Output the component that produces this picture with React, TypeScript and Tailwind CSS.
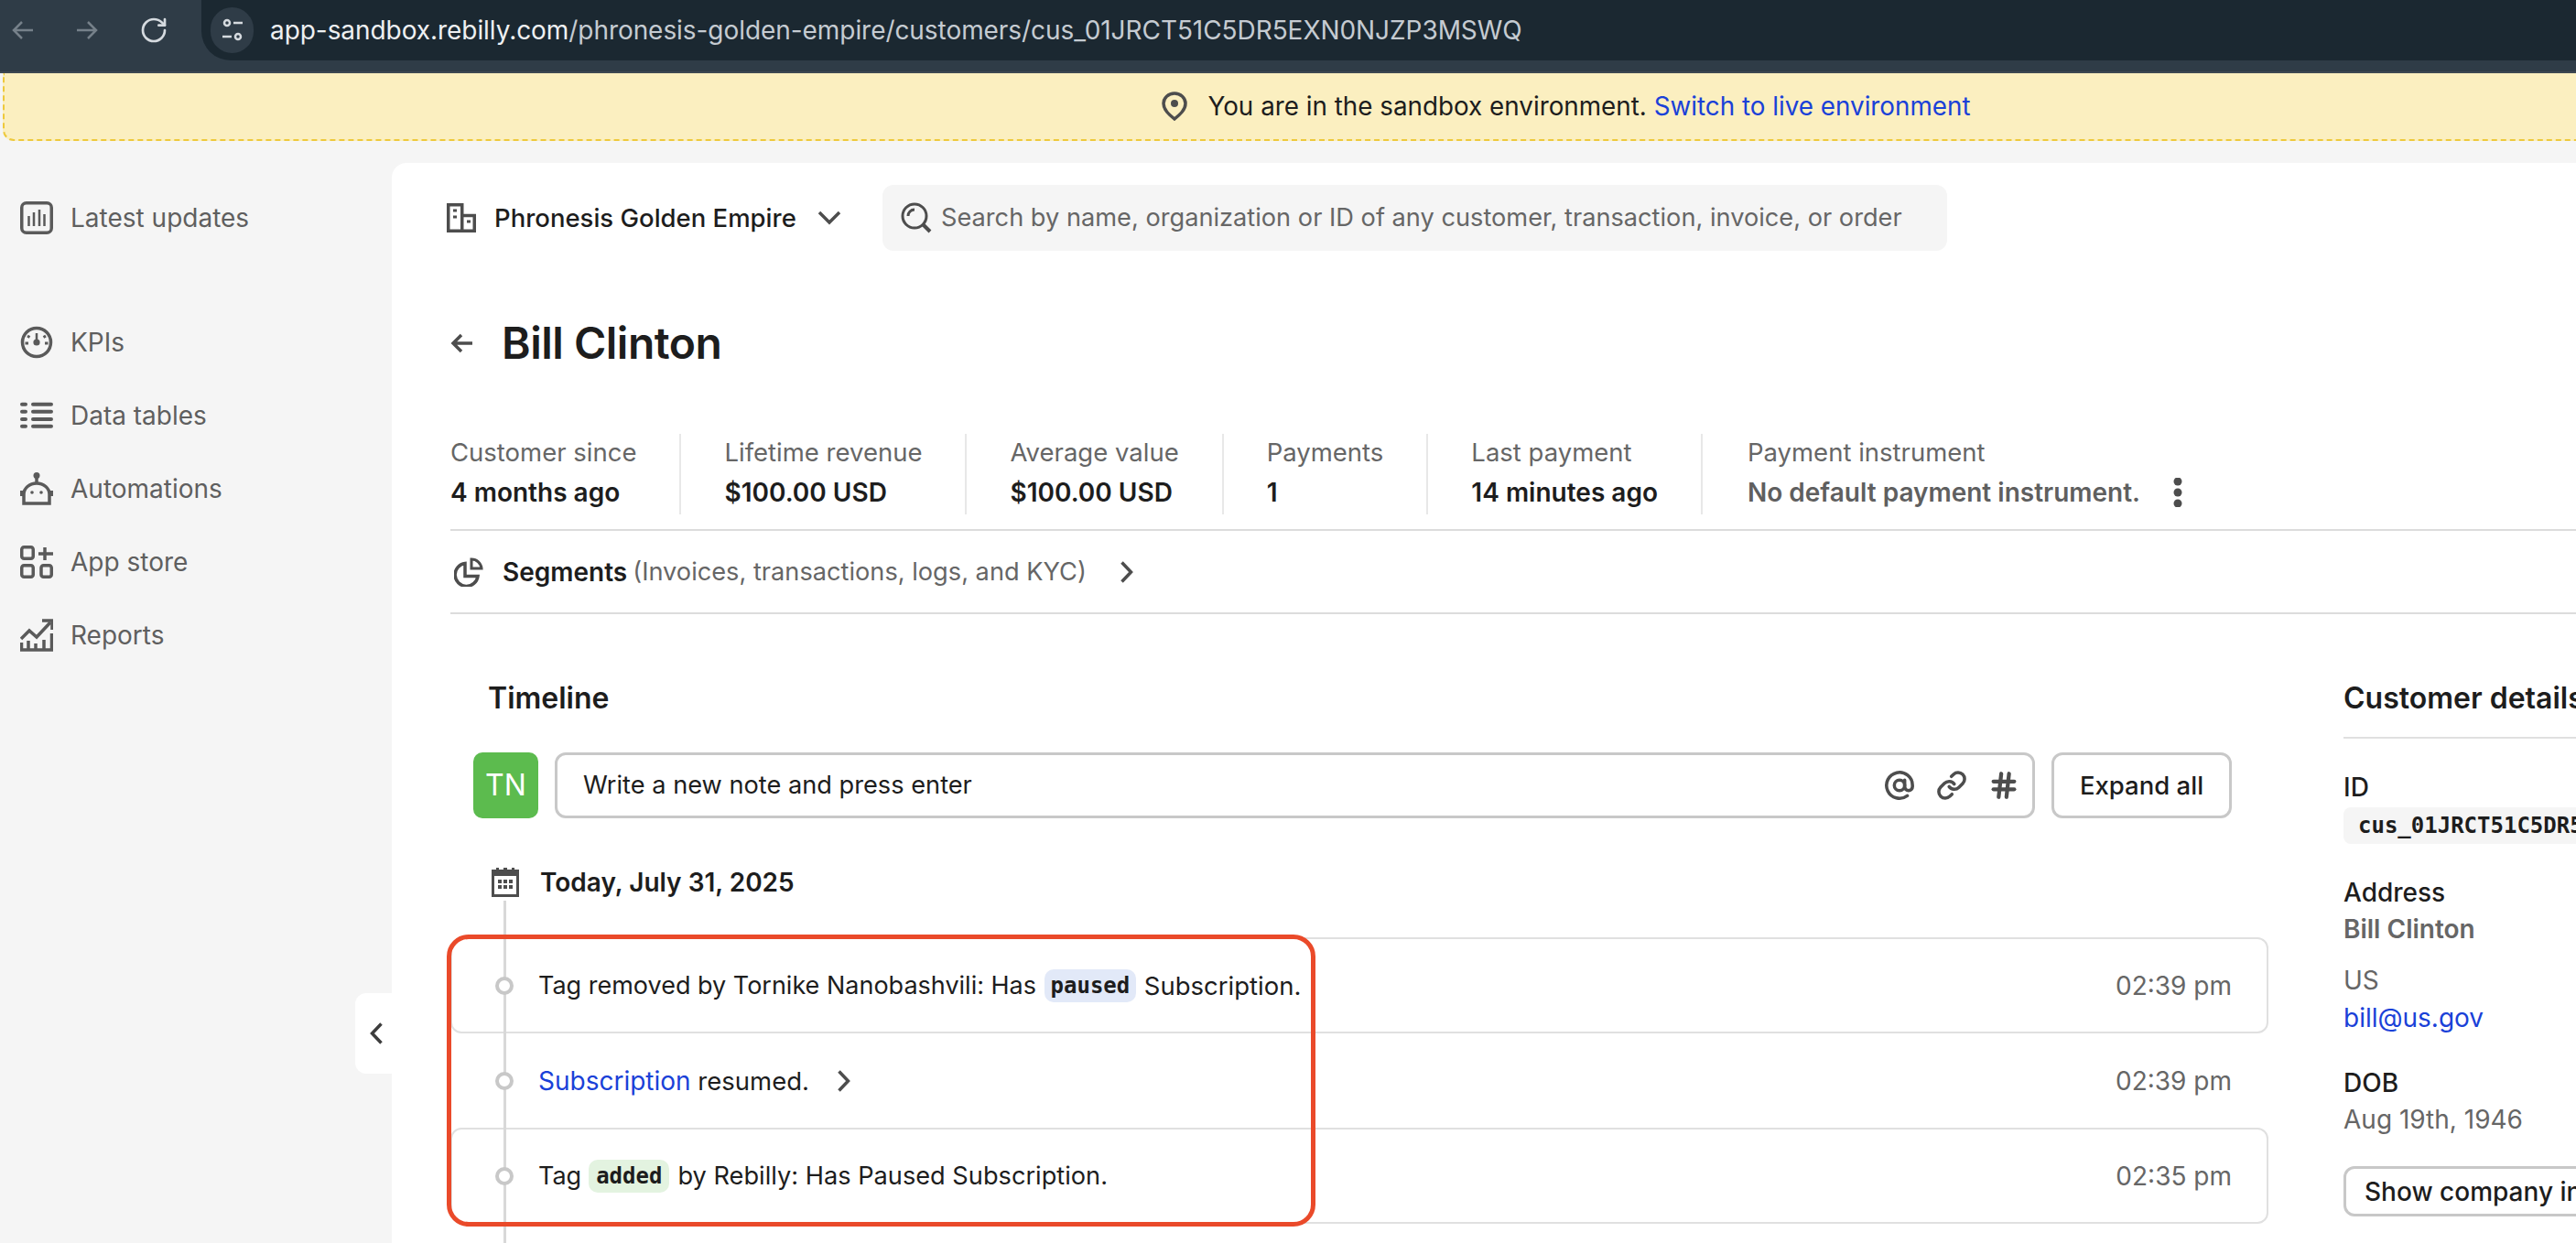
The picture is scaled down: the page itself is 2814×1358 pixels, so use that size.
import React from 'react';
import { RotateCw, Hash, Link, AtSign } from 'lucide-react';

const Svg: React.FC<{ className?: string; children: React.ReactNode }> = ({ className, children }) => (
  <svg viewBox="0 0 36 36" fill="none" stroke="currentColor" strokeWidth={3.5} className={className}>
    {children}
  </svg>
);

const navIcon = 'w-[36px] h-[36px] shrink-0 text-[#5a5a5a]';

const UpdatesIcon = () => (
  <Svg className={navIcon}>
    <rect x="1.75" y="1.75" width="32.5" height="32.5" rx="5" />
    <path d="M9.5 16v11M15 12v15M21 9v18M26.500 14v13" strokeWidth={2.5} />
  </Svg>
);
const GaugeIcon = () => (
  <Svg className={navIcon}>
    <circle cx="18" cy="18" r="15.5" />
    <path d="M18 8v10" strokeWidth={2.5} />
    <circle cx="18" cy="18" r="3.6" fill="currentColor" stroke="none" />
    <path d="M8 11l2.500 1.500M28 11l-2.500 1.500M5.500 19h3.500M27 19h3.500" strokeWidth={3} />
  </Svg>
);
const TablesIcon = () => (
  <Svg className={navIcon}>
    <path d="M2 5.700h4M2 13.700h4M2 22h4M2 29.700h4M14 5.700h20M14 13.700h20M14 22h20M14 29.700h20" strokeLinecap="round" strokeWidth={4} />
  </Svg>
);
const RobotIcon = () => (
  <Svg className={navIcon}>
    <circle cx="18" cy="3.5" r="3.5" fill="currentColor" stroke="none" />
    <path d="M18 6v6" />
    <path d="M4 34V24a14 12 0 0 1 28 0v10z" />
    <path d="M2 20v6M34 20v6" strokeWidth={4} />
    <circle cx="13" cy="22" r="1.8" fill="currentColor" stroke="none" />
    <circle cx="23" cy="22" r="1.8" fill="currentColor" stroke="none" />
  </Svg>
);
const AppsIcon = () => (
  <Svg className={navIcon}>
    <rect x="1.75" y="1.75" width="12.5" height="12.5" rx="2.5" />
    <rect x="1.75" y="21.75" width="12.5" height="12.5" rx="2.5" />
    <rect x="23" y="21.75" width="11.25" height="12.5" rx="2.5" />
    <path d="M27 2v14M20 9h16" />
  </Svg>
);
const ReportsIcon = () => (
  <Svg className={navIcon}>
    <path d="M1 22l9-9 8 7L33 4" />
    <path d="M24 2h11v10" />
    <path d="M1.500 26v8h33V16M9 24v9M17 27v6M26 23v10" />
  </Svg>
);
const BuildingIcon = () => (
  <svg viewBox="0 0 32 32" fill="none" stroke="#4d4d4d" strokeWidth={3.5} className="w-[32px] h-[32px] shrink-0">
    <path d="M1.750 30.250V1.750h15v28.500zM16.750 13.500h13.500v16.750h-13.500z" />
    <path d="M7 8h4M7 15h4M22 20h4" strokeWidth={3} />
  </svg>
);
const SearchIcon = () => (
  <svg viewBox="0 0 34 34" fill="none" stroke="#4d4d4d" strokeWidth={3} className="w-[34px] h-[34px] shrink-0">
    <circle cx="15" cy="15" r="13" />
    <path d="M8 15a7 7 0 0 1 7-7" />
    <path d="M24 24l8 8" strokeWidth={4} />
  </svg>
);
const PinIcon = () => (
  <svg viewBox="0 0 28 32" fill="none" stroke="#4d4d4d" strokeWidth={3.5} className="w-[28px] h-[32px] shrink-0">
    <path d="M14 30C8 25 2 20 2 13a12 11 0 0 1 24 0c0 7-6 12-12 17z" />
    <circle cx="14" cy="13" r="4" fill="#4d4d4d" stroke="none" />
  </svg>
);
const PieIcon = () => (
  <svg viewBox="0 0 32 32" fill="none" stroke="#4d4d4d" strokeWidth={3.5} className="w-[32px] h-[32px] shrink-0">
    <path d="M12 6.500a12.500 12.500 0 1 0 14 14H12z" />
    <path d="M19 2v10h11A11 11 0 0 0 19 2z" strokeWidth={3} />
  </svg>
);
const CalendarIcon = () => (
  <svg viewBox="0 0 32 32" className="w-[32px] h-[32px] shrink-0">
    <path d="M1 2h5V0h3v2h5V0h4v2h5V0h3v2h5v30H1z" fill="#4d4d4d" />
    <rect x="4" y="9" width="24" height="20" fill="#fff" />
    <path d="M8 13h4v4H8zM14 13h4v4h-4zM20 13h4v4h-4zM8 19h4v4H8zM14 19h4v4h-4zM20 19h4v4h-4z" fill="#4d4d4d" />
  </svg>
);
const SiteIcon = () => (
  <svg viewBox="0 0 24 26" fill="none" stroke="#d5dadf" strokeWidth={2.5} className="w-[24px] h-[26px]">
    <circle cx="6" cy="5" r="3" />
    <path d="M13 5h10M1 20h10" />
    <circle cx="18" cy="20" r="3" />
  </svg>
);
const Arrow: React.FC<{ className?: string; strokeWidth?: number }> = ({ className, strokeWidth = 3.5 }) => (
  <svg viewBox="0 0 24 22" fill="none" stroke="currentColor" strokeWidth={strokeWidth} className={className}>
    <path d="M24 11H3M12 2l-9 9 9 9" />
  </svg>
);
const Chevron: React.FC<{ className?: string }> = ({ className }) => (
  <svg viewBox="0 0 15 24" fill="none" stroke="currentColor" strokeWidth={3.5} className={className}>
    <path d="M2.500 1.500L12.500 12L2.500 22.500" />
  </svg>
);

const stats = [
  { label: 'Customer since', value: '4 months ago' },
  { label: 'Lifetime revenue', value: '$100.00 USD' },
  { label: 'Average value', value: '$100.00 USD' },
  { label: 'Payments', value: '1' },
  { label: 'Last payment', value: '14 minutes ago' },
];

const nav = [
  { icon: <GaugeIcon />, label: 'KPIs' },
  { icon: <TablesIcon />, label: 'Data tables' },
  { icon: <RobotIcon />, label: 'Automations' },
  { icon: <AppsIcon />, label: 'App store' },
  { icon: <ReportsIcon />, label: 'Reports' },
];

const dot = <span className="relative z-10 w-[20px] h-[20px] rounded-full border-[4px] border-[#c8c8c8] bg-white shrink-0" />;
const mono = "font-['DejaVu_Sans_Mono',monospace] text-[24px] leading-[36px] font-semibold text-[#1d1d1d]";

const App: React.FC = () => (
  <div className="relative flex flex-col w-[2814px] h-[1358px] overflow-hidden bg-[#f5f5f5] font-['Inter',sans-serif] text-[28px] leading-[40px] text-[#1d1d1d]">
    {/* Browser bar */}
    <div className="h-[80px] shrink-0 bg-[#2f3c47] border-b-2 border-[#3d4852] flex items-start">
      <div className="w-[115px] h-[66px] flex items-center shrink-0 pl-[12px] gap-[48px] text-[#76818a]">
        <Arrow strokeWidth={2.5} className="w-[24px] h-[22px] shrink-0" />
        <Arrow strokeWidth={2.5} className="w-[24px] h-[22px] shrink-0 rotate-180" />
        <RotateCw size={32} strokeWidth={2} className="shrink-0 text-[#d5dadf] -ml-[4px]" />
      </div>
      <div className="ml-[105px] flex-1 h-[66px] bg-[#1b2831] rounded-bl-[32px] flex items-center pl-[10px]">
        <div className="w-[47px] h-[50px] rounded-full bg-[#2f3c47] flex items-center justify-center shrink-0">
          <SiteIcon />
        </div>
        <span className="ml-[18px] text-[#c5cbd1] tracking-[-0.06px]">
          <span className="text-[#eef0f2]">app-sandbox.rebilly.com</span>/phronesis-golden-empire/customers/cus_01JRCT51C5DR5EXN0NJZP3MSWQ
        </span>
      </div>
    </div>

    {/* Sandbox banner */}
    <div className="h-[74px] w-[3416px] ml-[3px] shrink-0 bg-[#fbefc0] border-2 border-t-0 border-dashed border-[#eec93c] rounded-b-xl flex items-center justify-center gap-[22px]">
      <PinIcon />
      <span className="text-[27.8px]">
        You are in the sandbox environment. <span className="text-[#1a41d8]">Switch to live environment</span>
      </span>
    </div>

    <div className="flex flex-1 min-h-0 pt-[24px]">
      {/* Sidebar */}
      <aside className="w-[428px] shrink-0 pt-[20px] pl-[22px] text-[#5f5f5f]">
        <div className="h-[80px] flex items-center gap-[19px] mb-[56px]">
          <UpdatesIcon />
          Latest updates
        </div>
        {nav.map((item) => (
          <div key={item.label} className="h-[80px] flex items-center gap-[19px]">
            {item.icon}
            {item.label}
          </div>
        ))}
      </aside>

      {/* Main panel */}
      <main className="relative flex-1 min-w-0 bg-white rounded-tl-2xl pl-[64px] pt-[24px] overflow-hidden">
        <div className="flex items-center h-[72px]">
          <div className="w-[476px] flex items-center shrink-0 -ml-[4px]">
            <BuildingIcon />
            <span className="ml-[20px] text-[27.5px] font-medium">Phronesis Golden Empire</span>
            <svg viewBox="0 0 26 16" fill="none" stroke="#4d4d4d" strokeWidth={3.5} className="w-[26px] h-[16px] ml-[23px]">
              <path d="M2 2l11 11L24 2" />
            </svg>
          </div>
          <div className="w-[1163px] h-[72px] rounded-xl bg-[#f5f5f5] flex items-center pl-[20px] gap-[10px] text-[27.2px] text-[#666]">
            <SearchIcon />
            Search by name, organization or ID of any customer, transaction, invoice, or order
          </div>
        </div>

        <div className="mt-[69px] h-[64px] flex items-center">
          <Arrow className="w-[24px] h-[22px] text-[#4d4d4d]" />
          <h1 className="ml-[32px] text-[48px] leading-[64px] font-semibold tracking-[-0.5px]">Bill Clinton</h1>
        </div>

        {/* Stats */}
        <div className="mt-[67px] pb-[16px] border-b-2 border-[#dcdcdc] flex">
          {stats.map((s, i) => (
            <div key={s.label} className={`h-[88px] border-r-2 border-[#e8e8e8] pr-[47px] ${i === 0 ? '' : 'pl-[47px]'}`}>
              <p className="text-[27.5px] text-[#666]">{s.label}</p>
              <p className="mt-[4px] font-semibold">{s.value}</p>
            </div>
          ))}
          <div className="h-[88px] pl-[49px]">
            <p className="text-[27.5px] text-[#666]">Payment instrument</p>
            <div className="mt-[4px] flex items-center">
              <span className="font-semibold text-[#5f5f5f]">No default payment instrument.</span>
              <svg viewBox="0 0 10 32" className="w-[10px] h-[32px] ml-[36px]" fill="#4d4d4d">
                <circle cx="5" cy="4" r="4.500" />
                <circle cx="5" cy="16" r="4.500" />
                <circle cx="5" cy="28" r="4.500" />
              </svg>
            </div>
          </div>
        </div>

        {/* Segments */}
        <div className="h-[91px] border-b-2 border-[#dcdcdc] flex items-center pl-[4px]">
          <PieIcon />
          <span className="ml-[21px] font-semibold">Segments</span>
          <span className="ml-[6px] text-[27.2px] text-[#666]">(Invoices, transactions, logs, and KYC)</span>
          <Chevron className="w-[15px] h-[24px] ml-[36px] text-[#4d4d4d]" />
        </div>

        <div className="flex mt-[72px]">
          {/* Timeline */}
          <section className="w-[1986px] shrink-0">
            <h2 className="h-[40px] pl-[41px] text-[32px] leading-[40px] font-semibold">Timeline</h2>
            <div className="mt-[39px] pl-[25px] pr-[40px] flex gap-[18px]">
              <div className="w-[71px] h-[72px] shrink-0 rounded-[10px] bg-[#5cbb4e] text-white text-[32px] flex items-center justify-center">TN</div>
              <div className="flex-1 h-[72px] rounded-xl border-[3px] border-[#c8c8c8] flex items-center pl-[28px] pr-[14px] text-[27.2px]">
                <span className="flex-1">Write a new note and press enter</span>
                <div className="flex items-center gap-[23px] text-[#4d4d4d]">
                  <AtSign size={34} strokeWidth={2.5} />
                  <Link size={34} strokeWidth={2.5} />
                  <Hash size={34} strokeWidth={3} />
                </div>
              </div>
              <div className="w-[197px] h-[72px] shrink-0 rounded-xl border-[3px] border-[#c8c8c8] flex items-center justify-center text-[27.5px] font-medium">Expand all</div>
            </div>
            <div className="mt-[54px] pl-[44px] h-[32px] flex items-center gap-[22px]">
              <CalendarIcon />
              <span className="font-semibold">Today, July 31, 2025</span>
            </div>

            <div className="relative mt-[44px]">
              <div className="absolute left-[58px] top-[-40px] w-[3px] h-[400px] bg-[#d8d8d8]" />
              <div className="h-[105px] border-2 border-[#e0e0e0] rounded-xl flex items-center pl-[47px] pr-[38px]">
                {dot}
                <span className="ml-[27px] text-[27px]">Tag removed by Tornike Nanobashvili: Has</span>
                <span className={`${mono} ml-[9px] px-[6.5px] h-[36px] rounded-[10px] bg-[#e2e9f8]`}>paused</span>
                <span className="ml-[9px] flex-1 text-[27.5px]">Subscription.</span>
                <span className="text-[#666]">02:39 pm</span>
              </div>
              <div className="h-[103px] flex items-center pl-[49px] pr-[40px]">
                {dot}
                <span className="ml-[27px] text-[27.5px]"><span className="text-[#1a41d8] text-[28px]">Subscription</span> resumed.</span>
                <Chevron className="w-[15px] h-[24px] ml-[30px] text-[#4d4d4d] flex-none" />
                <span className="ml-auto text-[#666]">02:39 pm</span>
              </div>
              <div className="h-[105px] border-2 border-[#e0e0e0] rounded-xl flex items-center pl-[47px] pr-[38px]">
                {dot}
                <span className="ml-[27px] text-[27px]">Tag</span>
                <span className={`${mono} ml-[8px] px-[8px] h-[36px] rounded-[10px] bg-[#e3f3e0]`}>added</span>
                <span className="ml-[9px] flex-1 text-[27.2px]">by Rebilly: Has Paused Subscription.</span>
                <span className="text-[#666]">02:35 pm</span>
              </div>
            </div>
          </section>

          {/* Customer details */}
          <section className="w-[700px] shrink-0 ml-[82px]">
            <h2 className="h-[64px] border-b-2 border-[#e0e0e0] text-[32px] leading-[40px] font-semibold whitespace-nowrap">Customer details</h2>
            <p className="mt-[33px] font-medium">ID</p>
            <div className="mt-[2px] h-[40px] w-fit rounded-lg bg-[#f5f5f5] px-[16px] flex items-center font-['DejaVu_Sans_Mono',monospace] text-[24px] font-semibold">cus_01JRCT51C5DR5EXN0NJZP3MSWQ</div>
            <p className="mt-[33px] font-medium">Address</p>
            <p className="font-semibold text-[#666]">Bill Clinton</p>
            <p className="mt-[16px] text-[#666]">US</p>
            <p className="mt-[1px] text-[#1a41d8]">bill@us.gov</p>
            <p className="mt-[31px] font-medium">DOB</p>
            <p className="text-[#666]">Aug 19th, 1946</p>
            <div className="mt-[31px] h-[55px] w-fit rounded-xl border-[3px] border-[#c8c8c8] px-[20px] flex items-center font-medium whitespace-nowrap">Show company info</div>
          </section>
        </div>
      </main>
    </div>

    {/* Sidebar collapse tab */}
    <div className="absolute left-[388px] top-[1085px] w-[40px] h-[88px] bg-white rounded-l-xl flex items-center justify-center pl-[6px] text-[#3d3d3d]">
      <Chevron className="w-[15px] h-[24px] rotate-180" />
    </div>

    {/* Red annotation */}
    <div className="absolute left-[488px] top-[1021px] w-[949px] h-[319px] border-[5px] border-[#ea4a2a] rounded-[24px] pointer-events-none" />
  </div>
);

export default App;
